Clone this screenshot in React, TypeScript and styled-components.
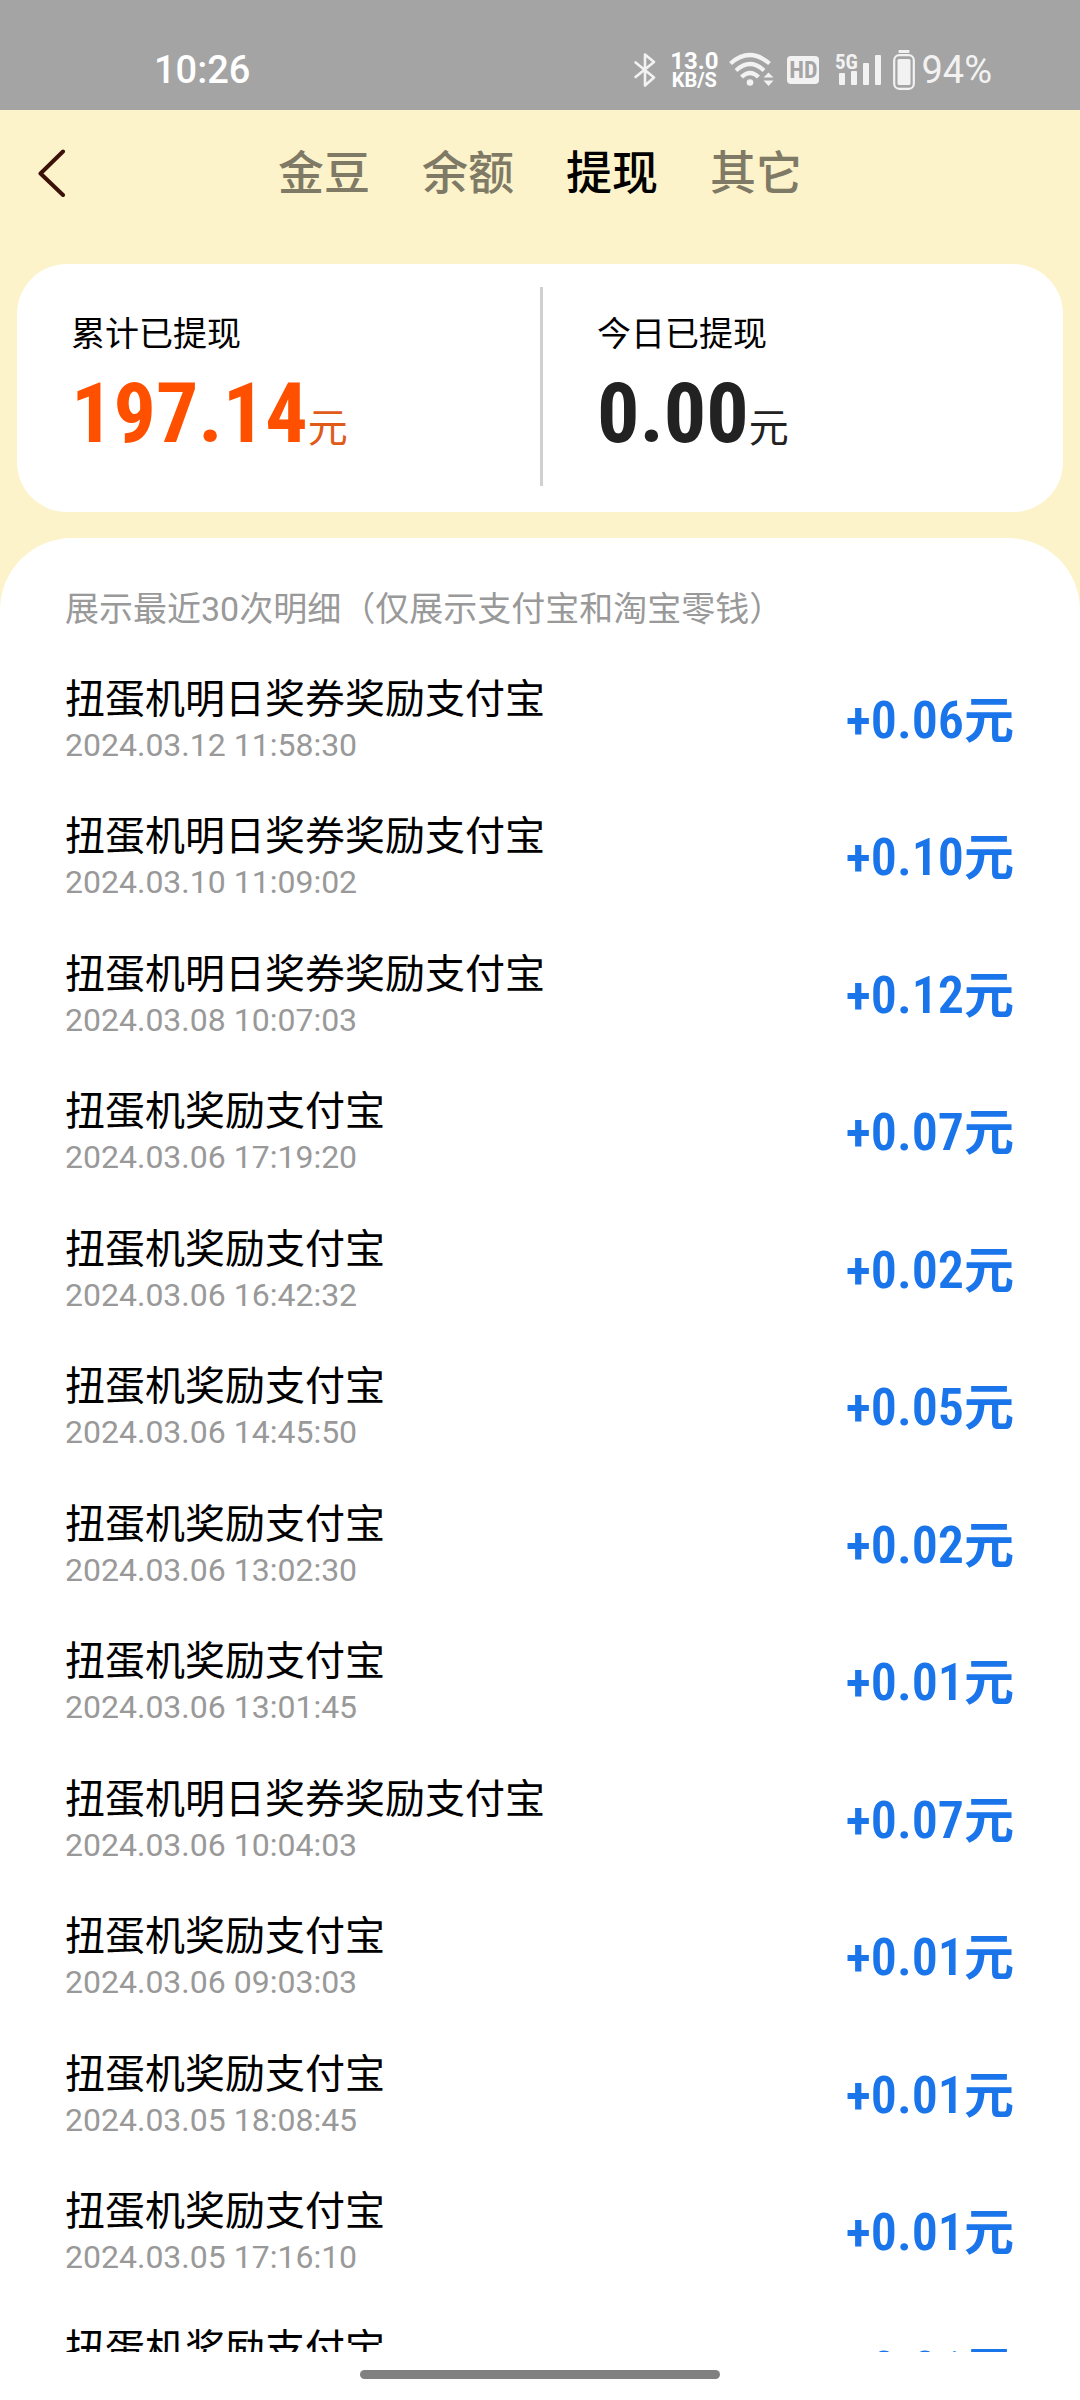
import React, { useState } from 'react';
import styled, { createGlobalStyle } from 'styled-components';

const CONDENSED = "'Roboto Condensed', Roboto, 'Noto Sans CJK SC', sans-serif";

const GlobalStyle = createGlobalStyle`
  *, *::before, *::after { box-sizing: border-box; }
  body {
    margin: 0;
    background: #fff;
    font-family: Roboto, 'Noto Sans CJK SC', sans-serif;
  }
  button { font: inherit; border: 0; padding: 0; background: none; cursor: pointer; }
`;

const Screen = styled.div`
  display: flex;
  flex-direction: column;
  height: 100vh;
  overflow: hidden;
  background: #fdf3cb;
`;

const StatusBar = styled.header`
  display: flex;
  align-items: flex-end;
  justify-content: space-between;
  flex: none;
  height: 110px;
  padding: 0 88px 16px 154px;
  background: #a4a4a4;
  color: #fff;
`;

const Clock = styled.time`
  font-size: 38px;
  font-weight: 500;
  line-height: 48px;
`;

const StatusIcons = styled.div`
  display: flex;
  align-items: center;
  height: 48px;
  color: #f2f2f2;

  svg { display: block; flex: none; }
`;

const NetSpeed = styled.div`
  display: flex;
  flex-direction: column;
  align-items: center;
  margin: 0 11px 0 14px;
  color: #fff;
  font-weight: 700;
`;

const SpeedValue = styled.span`
  font-size: 24px;
  line-height: 20px;
`;

const SpeedUnit = styled.span`
  font-size: 20px;
  line-height: 18px;
`;

const HdBadge = styled.span`
  margin: 0 16px 0 12px;
  width: 32px;
  border-radius: 4px;
  background: #f2f2f2;
  color: #a4a4a4;
  font-family: ${CONDENSED};
  font-size: 24px;
  font-weight: 700;
  line-height: 28px;
  text-align: center;
`;

const BatterySlot = styled.span`
  margin-left: 10px;
`;

const BatteryLevel = styled.span`
  margin-left: 6px;
  font-size: 38px;
  line-height: 48px;
`;

const NavBar = styled.nav`
  display: grid;
  grid-template-columns: 1fr auto 1fr;
  align-items: center;
  flex: none;
  height: 126px;
`;

const BackButton = styled.button`
  display: flex;
  justify-self: start;
  padding: 12px 36px;
  color: #3c1208;
`;

const Tabs = styled.div`
  display: flex;
  gap: 52px;
`;

const Tab = styled.button<{ $active: boolean }>`
  color: ${(p) => (p.$active ? '#000' : '#7f7a66')};
  font-size: 46px;
  font-weight: 500;
  line-height: 64px;
`;

const Summary = styled.section`
  display: grid;
  grid-template-columns: 1fr 3px calc(50% - 3px);
  flex: none;
  margin: 28px 17px 26px;
  border-radius: 50px;
  background: #fff;
`;

const Divider = styled.div`
  margin: 23px 0 26px;
  background: #d0d0d0;
`;

const Total = styled.div`
  padding: 46px 0 49px 54px;
`;

const TotalLabel = styled.div`
  font-size: 34px;
  line-height: 48px;
  color: #000;
`;

const TotalValue = styled.div<{ $highlight?: boolean }>`
  display: flex;
  align-items: baseline;
  margin-top: 6px;
  color: ${(p) => (p.$highlight ? '#ff5000' : '#222')};
  font-family: ${CONDENSED};
  font-size: 84px;
  font-weight: 700;
  line-height: 99px;
`;

const Unit = styled.span<{ $highlight?: boolean }>`
  color: ${(p) => (p.$highlight ? '#e05a1a' : '#222')};
  font-size: 40px;
  font-weight: 400;
  line-height: 48px;
`;

const Panel = styled.main`
  flex: 1;
  min-height: 0;
  padding: 47px 66px 0 65px;
  overflow: hidden;
  border-radius: 72px 72px 0 0;
  background: #fff;
`;

const Hint = styled.p`
  margin: 0 0 43px;
  color: #999;
  font-size: 34px;
  line-height: 48px;
`;

const Records = styled.ul`
  margin: 0;
  padding: 0;
  list-style: none;
`;

const Record = styled.li`
  display: flex;
  align-items: center;
  justify-content: space-between;
  padding-bottom: 47px;

  &:nth-child(even) { padding-bottom: 48px; }
`;

const RecordTitle = styled.div`
  color: #000;
  font-size: 40px;
  line-height: 48px;
`;

const RecordTime = styled.time`
  display: block;
  color: #999;
  font-size: 32px;
  line-height: 42px;
`;

const Amount = styled.span`
  color: #1a74ea;
  font-family: ${CONDENSED};
  font-size: 52px;
  font-weight: 600;
  line-height: 60px;
  white-space: nowrap;
`;

const AmountUnit = styled.span`
  font-size: 50px;
`;

const HomeArea = styled.footer`
  display: flex;
  justify-content: center;
  flex: none;
  height: 48px;
  padding-top: 18px;
  background: #fff;
`;

const HomeIndicator = styled.div`
  width: 360px;
  height: 9px;
  border-radius: 5px;
  background: #808080;
`;

const BluetoothIcon = () => (
  <svg width="22" height="36" viewBox="0 0 22 36" fill="none" stroke="currentColor" strokeWidth="2.6" strokeLinejoin="round" strokeLinecap="round" aria-hidden="true">
    <path d="M1.6 10.5 20 25.5 11 33.5V2.5L20 10 1.6 25" />
  </svg>
);

const WifiIcon = () => (
  <svg width="46" height="36" viewBox="0 0 46 36" fill="none" stroke="currentColor" strokeWidth="4.2" aria-hidden="true">
    <path d="M1.5 11.5Q20.5-5.5 40.5 11.5" />
    <path d="M7 18.5Q21 5.5 35 18.5" />
    <path d="M12.5 25Q21 17 29.5 25" />
    <circle cx="21" cy="30.5" r="3.3" fill="currentColor" stroke="none" />
    <path d="M34.5 25.5 39.5 20.5 44.5 25.5ZM34.5 28.5H44.5L39.5 34Z" fill="currentColor" stroke="none" />
  </svg>
);

const SignalIcon = () => (
  <svg width="48" height="44" viewBox="0 -4 48 44" fill="currentColor" aria-hidden="true">
    <text x="0" y="17" fontFamily="Roboto Condensed, Roboto, sans-serif" fontSize="21" fontWeight="700">5G</text>
    <rect x="4" y="21" width="6" height="12" rx="1" />
    <rect x="16" y="19" width="6" height="14" rx="1" />
    <rect x="28" y="11" width="6" height="22" rx="1" />
    <rect x="40" y="3" width="6" height="30" rx="1" />
  </svg>
);

const BatteryIcon = () => (
  <svg width="22" height="40" viewBox="0 0 22 40" fill="none" aria-hidden="true">
    <rect x="5.5" y="0" width="11" height="3" rx="1" fill="currentColor" />
    <rect x="1.2" y="5.2" width="19.6" height="33.6" rx="5" stroke="currentColor" strokeWidth="2.2" />
    <rect x="4.5" y="9" width="13" height="26" rx="1.5" fill="currentColor" />
  </svg>
);

const BackIcon = () => (
  <svg width="32" height="48" viewBox="0 0 32 48" fill="none" stroke="currentColor" strokeWidth="4" strokeLinecap="round" strokeLinejoin="round" aria-hidden="true">
    <path d="M27 2.5 4.5 24.500 27 46" />
  </svg>
);

const TABS = ['金豆', '余额', '提现', '其它'];

const DAILY = '扭蛋机奖励支付宝';
const NEXT_DAY = '扭蛋机明日奖券奖励支付宝';

const RECORDS = [
  { title: NEXT_DAY, time: '2024.03.12 11:58:30', amount: '0.06' },
  { title: NEXT_DAY, time: '2024.03.10 11:09:02', amount: '0.10' },
  { title: NEXT_DAY, time: '2024.03.08 10:07:03', amount: '0.12' },
  { title: DAILY, time: '2024.03.06 17:19:20', amount: '0.07' },
  { title: DAILY, time: '2024.03.06 16:42:32', amount: '0.02' },
  { title: DAILY, time: '2024.03.06 14:45:50', amount: '0.05' },
  { title: DAILY, time: '2024.03.06 13:02:30', amount: '0.02' },
  { title: DAILY, time: '2024.03.06 13:01:45', amount: '0.01' },
  { title: NEXT_DAY, time: '2024.03.06 10:04:03', amount: '0.07' },
  { title: DAILY, time: '2024.03.06 09:03:03', amount: '0.01' },
  { title: DAILY, time: '2024.03.05 18:08:45', amount: '0.01' },
  { title: DAILY, time: '2024.03.05 17:16:10', amount: '0.01' },
  { title: DAILY, time: '', amount: '0.01' },
];

export default function App() {
  const [active, setActive] = useState('提现');

  return (
    <Screen lang="zh-CN">
      <GlobalStyle />
      <StatusBar>
        <Clock>10:26</Clock>
        <StatusIcons>
          <BluetoothIcon />
          <NetSpeed>
            <SpeedValue>13.0</SpeedValue>
            <SpeedUnit>KB/S</SpeedUnit>
          </NetSpeed>
          <WifiIcon />
          <HdBadge>HD</HdBadge>
          <SignalIcon />
          <BatterySlot>
            <BatteryIcon />
          </BatterySlot>
          <BatteryLevel>94%</BatteryLevel>
        </StatusIcons>
      </StatusBar>

      <NavBar>
        <BackButton type="button" aria-label="返回">
          <BackIcon />
        </BackButton>
        <Tabs role="tablist">
          {TABS.map((tab) => (
            <Tab
              key={tab}
              type="button"
              role="tab"
              aria-selected={tab === active}
              $active={tab === active}
              onClick={() => setActive(tab)}
            >
              {tab}
            </Tab>
          ))}
        </Tabs>
      </NavBar>

      <Summary>
        <Total>
          <TotalLabel>累计已提现</TotalLabel>
          <TotalValue $highlight>
            197.14<Unit $highlight>元</Unit>
          </TotalValue>
        </Total>
        <Divider />
        <Total>
          <TotalLabel>今日已提现</TotalLabel>
          <TotalValue>
            0.00<Unit>元</Unit>
          </TotalValue>
        </Total>
      </Summary>

      <Panel>
        <Hint>展示最近30次明细（仅展示支付宝和淘宝零钱）</Hint>
        <Records>
          {RECORDS.map((record, index) => (
            <Record key={index}>
              <div>
                <RecordTitle>{record.title}</RecordTitle>
                <RecordTime>{record.time || '\u00a0'}</RecordTime>
              </div>
              <Amount>
                +{record.amount}
                <AmountUnit>元</AmountUnit>
              </Amount>
            </Record>
          ))}
        </Records>
      </Panel>

      <HomeArea>
        <HomeIndicator />
      </HomeArea>
    </Screen>
  );
}
